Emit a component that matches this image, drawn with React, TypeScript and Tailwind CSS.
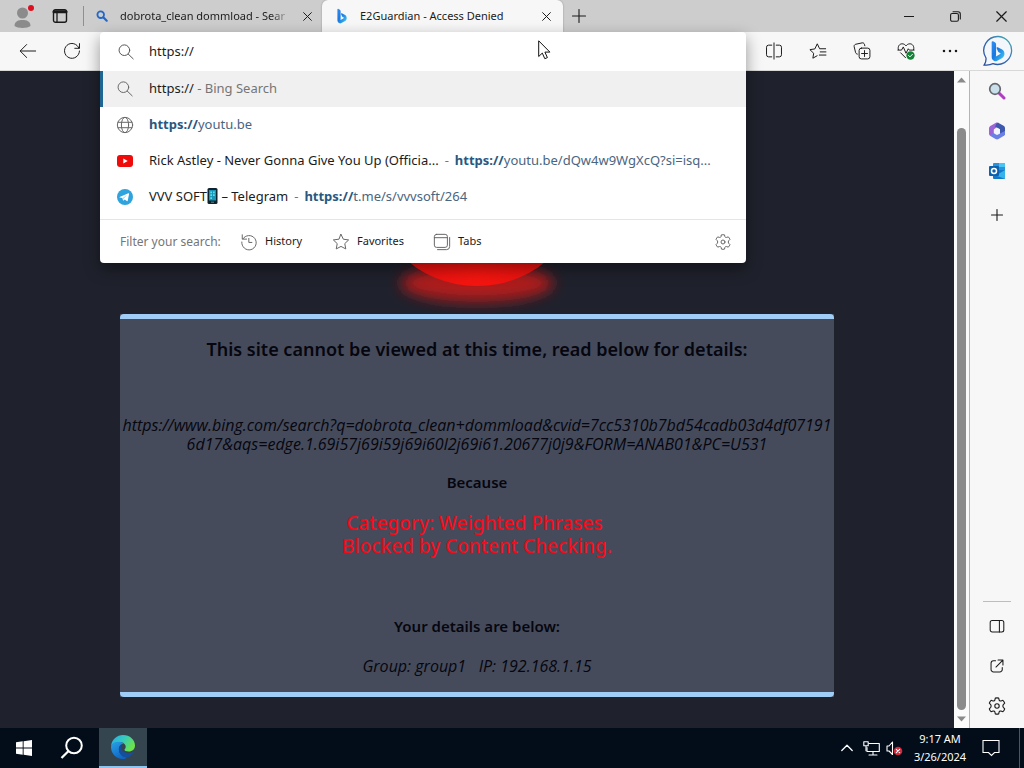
import React, { useState } from 'react';

type IconProps = { size?: number; className?: string; box?: string; children: React.ReactNode };

function Icon({ size = 20, className = '', box = '0 0 20 20', children }: IconProps) {
  return (
    <svg
      width={size}
      height={size}
      viewBox={box}
      fill="none"
      stroke="currentColor"
      strokeWidth="1.1"
      strokeLinecap="round"
      strokeLinejoin="round"
      aria-hidden="true"
      className={`shrink-0 ${className}`}
    >
      {children}
    </svg>
  );
}

const SearchIcon = ({ className = '' }: { className?: string }) => (
  <Icon size={18} className={className}>
    <circle cx="8.2" cy="8" r="5.9" />
    <path d="M12.5 12.300 18 17.6" />
  </Icon>
);

const GearIcon = ({ size = 18 }: { size?: number }) => (
  <Icon size={size}>
    <circle cx="10" cy="10" r="2.2" />
    <path d="M8.3 2.1 Q10 1.6 11.7 2.1 L12.1 4 Q12.5 5.3 14 4.9 L15.9 4.3 Q17.2 5.6 17.7 7.2 L16.3 8.6 Q15.3 10 16.3 11.4 L17.7 12.8 Q17.2 14.4 15.9 15.7 L14 15.1 Q12.5 14.7 12.1 16 L11.7 17.9 Q10 18.4 8.3 17.9 L7.9 16 Q7.5 14.7 6 15.1 L4.1 15.7 Q2.8 14.4 2.3 12.8 L3.7 11.4 Q4.7 10 3.7 8.6 L2.3 7.2 Q2.8 5.6 4.1 4.3 L6 4.9 Q7.5 5.3 7.9 4 Z" />
  </Icon>
);

const CloseIcon = ({ size = 10 }: { size?: number }) => (
  <Icon size={size} box="0 0 10 10">
    <path d="M.7.7 9.3 9.3M9.3.7.7 9.3" />
  </Icon>
);

const PlusIcon = () => (
  <Icon size={14} box="0 0 14 14">
    <path d="M7 .5v13M.5 7h13" />
  </Icon>
);

function BingMark({ size, id }: { size: number; id: string }) {
  return (
    <svg width={size} height={size} viewBox="0 0 16 16" aria-hidden="true" className="shrink-0">
      <defs>
        <linearGradient id={id} x1="0" y1="0" x2="1" y2="1">
          <stop offset="0" stopColor="#2f8df2" />
          <stop offset="0.45" stopColor="#1a78e0" />
          <stop offset="1" stopColor="#43d0f2" />
        </linearGradient>
      </defs>
      <path
        fill={`url(#${id})`}
        d="M3.4 1.5c0-.6.5-.8 1-.6l1.5.9c.5.4.7.8.7 1.4v7.6l-.1 1.2 2.8-1.6.7-.7-1.3-.7c-.5-.3-.7-.7-.9-1.2L7 6c-.2-.6.2-1 .8-.7l2.900 1.500c1.200.7 2 1.800 2 3.200 0 1.300-.5 2.300-1.600 3L7.500 15c-.9.500-1.700.500-2.500 0-1-.6-1.600-1.500-1.600-2.700Z"
      />
    </svg>
  );
}

const BingChat = () => (
  <span className="relative flex size-8 items-center justify-center">
    <svg width="32" height="32" viewBox="0 0 32 32" aria-hidden="true" className="absolute inset-0">
      <defs>
        <linearGradient id="bubble" x1="0" y1="1" x2="1" y2="0">
          <stop offset="0" stopColor="#234a9e" />
          <stop offset="0.6" stopColor="#3c74b4" />
          <stop offset="1" stopColor="#41b8b0" />
        </linearGradient>
      </defs>
      <path
        d="M16.500 1.500a14 14 0 1 1-5.500 27.200c-2.500 1.300-5.500 1.600-8.800 1.300 1.700-2.300 2-4.500 1.800-7A14 14 0 0 1 16.500 1.500Z"
        fill="#f3f7fc"
        stroke="url(#bubble)"
        strokeWidth="1.300"
      />
    </svg>
    <span className="relative">
      <BingMark size={22} id="bing-chat" />
    </span>
  </span>
);

const EdgeLogo = () => (
  <svg width="26" height="26" viewBox="0 0 26 26" aria-hidden="true">
    <defs>
      <linearGradient id="edge-top" x1="0" y1="0" x2="1" y2="0.5">
        <stop offset="0" stopColor="#27a9e8" />
        <stop offset="0.5" stopColor="#35c9c0" />
        <stop offset="1" stopColor="#6be24a" />
      </linearGradient>
      <linearGradient id="edge-body" x1="0" y1="0" x2="0.6" y2="1">
        <stop offset="0" stopColor="#2aa3e6" />
        <stop offset="1" stopColor="#0f63c4" />
      </linearGradient>
    </defs>
    <path d="M1 12C2 5 7 1 13 1c7 0 12 5 12 10.500 0 3.700-2.700 6-6.300 6-2.700 0-4.200-.8-4.200-1.700 0-.7 1.200-1.100 1.200-3 0-2.500-2.500-4.800-6-4.800C5.500 8 2 10 1 12Z" fill="url(#edge-top)" />
    <path d="M1 12c1-3 4.500-4.500 8.200-4.300 1.800.1 3.500.8 4.700 1.800-3.400.4-5 3-5 5.800 0 4.800 4 8.600 8.700 8.100-1.400.9-3 1.500-4.600 1.500C6 25 .6 19.500 1 12Z" fill="url(#edge-body)" />
    <path d="M11.500 10.600c-1.700 1-2.600 2.700-2.600 4.700 0 4.600 3.700 8.400 8.600 8.100 2.600-.9 4.800-2.700 6.100-5-.2-.5-.6-.4-1-.2-4.700 2.200-10.800.2-11.500-4.200-.2-1.300 0-2.500.4-3.400Z" fill="#134f9e" />
  </svg>
);

const YoutubeIcon = () => (
  <svg width="18" height="18" viewBox="0 0 18 18" aria-hidden="true" className="shrink-0">
    <rect x="1" y="3" width="16" height="12" rx="3" fill="#f00b0b" />
    <path d="M7.300 6.500v5L11.700 9Z" fill="#fff" />
  </svg>
);

const TelegramIcon = () => (
  <svg width="18" height="18" viewBox="0 0 18 18" aria-hidden="true" className="shrink-0">
    <circle cx="9" cy="9" r="8" fill="#2fa3dd" />
    <path d="m3.600 8.900 8.800-3.600c.5-.2.8.1.7.6l-1.400 6.800c-.1.5-.5.6-.9.3l-2.100-1.600-1.100 1c-.3.3-.5.1-.6-.2l-.7-2.300-2.600-.5c-.4-.1-.4-.3-.1-.5Z" fill="#fff" />
    <path d="m6.900 9.800 4.300-2.900-3.400 3.600-.3 1.500Z" fill="#a9d6ee" />
  </svg>
);

const GlobeIcon = () => (
  <Icon size={18} className="text-[#666]">
    <circle cx="10" cy="10" r="8.500" />
    <ellipse cx="10" cy="10" rx="4" ry="8.500" />
    <path d="M2.300 7h15.400M2.300 13h15.400" />
  </Icon>
);

const PhoneGlyph = () => (
  <svg width="11" height="16" viewBox="0 0 11 16" role="img" aria-label="phone" className="inline-block align-[-3px]">
    <rect x="0.500" y="0" width="10" height="16" rx="1.500" fill="#10222c" />
    <rect x="2" y="2" width="7" height="10.500" fill="#1797b8" />
    <path d="M3.300 3.500h1.700v1.700H3.300zM6 3.500h1.700v1.700H6zM3.300 6.300h1.700V8H3.300zM6 6.300h1.700V8H6zM3.300 9.200h1.700v1.700H3.300z" fill="#63dbe6" />
    <path d="M4 14.200h3" stroke="#6b8994" strokeWidth="1" />
  </svg>
);

function TitleBar() {
  return (
    <header className="flex h-8 items-stretch bg-[#cdcdcd] text-[11px] text-[#1b1b1b]">
      <button aria-label="Profile" className="flex w-11 items-center justify-center">
        <svg width="24" height="26" viewBox="0 0 24 26" aria-hidden="true">
          <circle cx="12.500" cy="10" r="5.500" fill="#8b8b8b" />
          <path d="M4.500 23c0-5 4-6 8-6s8 1 8 6c-3 2.500-13 2.500-16 0Z" fill="#8b8b8b" />
          <circle cx="21" cy="5" r="3" fill="#dc1020" />
        </svg>
      </button>
      <button aria-label="Tab actions" className="flex w-8 items-center justify-center">
        <Icon size={16} box="0 0 16 16">
          <rect x="1.500" y="1.800" width="13" height="12.500" rx="2" strokeWidth="1.400" />
          <path d="M2 3.800h12" strokeWidth="3" />
          <path d="M5 4v10" strokeWidth="1.300" />
        </Icon>
      </button>
      <span className="my-1.5 ml-[7px] w-px bg-[#8f8f8f]" />
      <div className="flex w-[238px] items-center pr-2.5 pl-3">
        <svg width="12" height="12" viewBox="0 0 12 12" fill="none" stroke="#2368c8" strokeLinecap="round" aria-hidden="true">
          <circle cx="4.700" cy="4.700" r="3.300" strokeWidth="1.800" />
          <path d="m7.500 7.500 3.200 3.200" strokeWidth="2.200" />
        </svg>
        <span className="ml-3 flex-1 overflow-hidden whitespace-nowrap [mask-image:linear-gradient(to_right,#000_88%,transparent)]">
          dobrota_clean dommload - Sear
        </span>
        <button aria-label="Close tab" className="ml-3">
          <CloseIcon size={9} />
        </button>
      </div>
      <div className="flex w-[241px] items-center rounded-t-md bg-[#f7f7f7] px-3 shadow-[0_0_2px_rgba(0,0,0,0.3)]">
        <BingMark size={16} id="bing-tab" />
        <span className="ml-2.5 flex-1 whitespace-nowrap">E2Guardian - Access Denied</span>
        <button aria-label="Close tab">
          <CloseIcon size={9} />
        </button>
      </div>
      <button aria-label="New tab" className="flex w-8 items-center justify-center">
        <PlusIcon />
      </button>
      <div className="ml-auto flex">
        <button aria-label="Minimize" className="flex w-[46px] items-center justify-center">
          <Icon size={10} box="0 0 10 10">
            <path d="M0 5.500h10" />
          </Icon>
        </button>
        <button aria-label="Restore" className="flex w-[46px] items-center justify-center">
          <Icon size={11} box="0 0 11 11">
            <rect x="0.600" y="2.500" width="7.800" height="7.800" rx="1.500" />
            <path d="M3 .7h5a2.300 2.300 0 0 1 2.300 2.300v5" />
          </Icon>
        </button>
        <button aria-label="Close" className="flex w-[46px] items-center justify-center">
          <CloseIcon size={11} />
        </button>
      </div>
    </header>
  );
}

type Suggestion = { icon: React.ReactNode; title?: React.ReactNode; rest: string };

const suggestions: Suggestion[] = [
  { icon: <GlobeIcon />, rest: 'youtu.be' },
  {
    icon: <YoutubeIcon />,
    title: 'Rick Astley - Never Gonna Give You Up (Officia...',
    rest: 'youtu.be/dQw4w9WgXcQ?si=isq...',
  },
  {
    icon: <TelegramIcon />,
    title: (
      <>
        VVV SOFT
        <PhoneGlyph /> – Telegram
      </>
    ),
    rest: 't.me/s/vvvsoft/264',
  },
];

function AddressBar() {
  const [query, setQuery] = useState('https://');
  return (
    <div className="relative flex-1">
      <div className="absolute inset-x-0 top-0 z-20 rounded bg-white text-[13px] text-[#1b1b1b] shadow-[0_6px_16px_rgba(0,0,0,0.4)]">
        <label className="flex h-[39px] items-center pl-[17px]">
          <SearchIcon className="text-[#555]" />
          <input
            aria-label="Address and search bar"
            value={query}
            onChange={(e) => setQuery(e.target.value)}
            className="ml-3.5 flex-1 bg-transparent outline-none"
          />
        </label>
        <ul>
          <li className="flex h-9 items-center border-l-[3px] border-[#1f6792] bg-[#f0f0f0] pl-[13px]">
            <SearchIcon className="text-[#666]" />
            <span className="ml-[15px]">
              https:// <span className="text-[#757575]">- Bing Search</span>
            </span>
          </li>
          {suggestions.map((s) => (
            <li key={s.rest} className="flex h-9 items-center pl-4 whitespace-nowrap">
              {s.icon}
              <span className="ml-[15px] flex items-center">
                {s.title && (
                  <>
                    <span>{s.title}</span>
                    <span className="mx-1.5 text-[#757575]">-</span>
                  </>
                )}
                <a href="#suggestion" className="text-[#4a6580]">
                  <b className="font-bold text-[#28587f]">https://</b>
                  {s.rest}
                </a>
              </span>
            </li>
          ))}
        </ul>
        <div className="mt-1 flex h-11 items-center border-t border-[#e5e5e5] pr-3.5 pl-5 text-[11px]">
          <span className="w-[120px] text-[12px] text-[#757575]">Filter your search:</span>
          <button className="flex w-[92px] items-center gap-[7px]">
            <Icon size={18} className="text-[#666]">
              <path d="M3.200 6.500A8 8 0 1 1 2 10M2.500 2v4.800h4.800M9.800 6v4.500h3.400" />
            </Icon>
            History
          </button>
          <button className="flex w-[101px] items-center gap-[7px]">
            <Icon size={18} className="text-[#666]">
              <path d="m10 1.500 2.600 5.400 5.900.8-4.300 4.100 1.100 5.900L10 14.900l-5.300 2.800 1.100-5.900L1.500 7.700l5.900-.8Z" />
            </Icon>
            Favorites
          </button>
          <button className="flex items-center gap-[7px]">
            <Icon size={18} className="text-[#666]">
              <rect x="1.500" y="1.500" width="14.500" height="14.500" rx="2.500" />
              <path d="M1.500 5.200H16M18.500 5v10a3.500 3.500 0 0 1-3.500 3.500H5" />
            </Icon>
            Tabs
          </button>
          <button aria-label="Search settings" className="ml-auto text-[#666]">
            <GearIcon />
          </button>
        </div>
      </div>
    </div>
  );
}

function Toolbar() {
  const tool = 'flex w-11 items-center justify-center';
  return (
    <nav className="flex h-[39px] items-stretch border-b border-[#d8d8d8] bg-[#f7f7f7] text-[#1b1b1b]">
      <button aria-label="Back" className="flex w-14 items-center justify-center">
        <Icon size={18}>
          <path d="M18.500 10h-17M8.500 2.800 1.300 10l7.200 7.200" />
        </Icon>
      </button>
      <button aria-label="Refresh" className="mr-3 flex w-8 items-center justify-center">
        <Icon size={18}>
          <path d="M17.800 7A8.300 8.300 0 1 0 18.300 10M18.300 1.800V7h-5.200" />
        </Icon>
      </button>
      <AddressBar />
      <div className="flex pl-1.5">
        <button aria-label="Split screen" className={tool}>
          <Icon size={18}>
            <path d="M7.500 3.500H4A2.300 2.300 0 0 0 1.700 5.800v8.400A2.300 2.300 0 0 0 4 16.500h3.500M12.500 3.500H16a2.300 2.300 0 0 1 2.300 2.300v8.400a2.300 2.300 0 0 1-2.300 2.300h-3.500M10 1v18" />
          </Icon>
        </button>
        <button aria-label="Favorites" className={tool}>
          <Icon size={18}>
            <path d="M9 15.300 4.300 18l.9-5.500L1 8.500l5.500-.8L9.200 2l2.600 5.500H18.500M12.500 11h6.300M11.500 14.500h7.300" />
          </Icon>
        </button>
        <button aria-label="Collections" className={tool}>
          <Icon size={18}>
            <rect x="6.800" y="6.800" width="12" height="12" rx="2.500" />
            <path d="M12.800 9.500v6.600M9.500 12.800h6.600M4.800 13.500c-1.200-.2-1.700-1-2-2L1.300 5.200c-.3-1.300.4-2.300 1.700-2.700l7-1.500c1.300-.3 2.200.3 2.700 1.500l.4 1.700" />
          </Icon>
        </button>
        <button aria-label="Browser essentials" className={tool}>
          <Icon size={18}>
            <path d="M1.500 8.500C.5 4.500 3 2 5.700 2c2 0 3.300 1 4.300 2.300C11 3 12.300 2 14.300 2 17 2 19.500 4.500 18.500 8.500M1 9h4l2-3.500 3 7 2.500-5 1.200 1.500H19M4 12l5.500 5.500" />
            <circle cx="15" cy="15" r="4.600" fill="#128236" stroke="none" />
            <path d="m12.900 15 1.500 1.500 2.700-2.800" stroke="#fff" />
          </Icon>
        </button>
        <button aria-label="Settings and more" className={tool}>
          <Icon size={16}>
            <g fill="currentColor" stroke="none">
              <circle cx="2.500" cy="10" r="1.600" />
              <circle cx="10" cy="10" r="1.600" />
              <circle cx="17.500" cy="10" r="1.600" />
            </g>
          </Icon>
        </button>
        <button aria-label="Bing chat" className="flex w-[52px] items-center justify-center">
          <BingChat />
        </button>
      </div>
    </nav>
  );
}

function BlockedPage() {
  return (
    <main className="flex-1 bg-[#1f212c] px-[120px] text-center text-[#05060f]">
      <svg width="260" height="243" viewBox="0 0 260 243" aria-hidden="true" className="mx-auto block">
        <defs>
          <filter id="glow" x="-30%" y="-60%" width="160%" height="220%">
            <feGaussianBlur stdDeviation="7" />
          </filter>
          <radialGradient id="disc" cx="0.500" cy="0.950" r="0.550">
            <stop offset="0" stopColor="#f7150f" />
            <stop offset="0.500" stopColor="#ea1210" />
            <stop offset="1" stopColor="#b80c10" />
          </radialGradient>
        </defs>
        <ellipse cx="130" cy="212" rx="76" ry="19" fill="#ad1a1f" filter="url(#glow)" />
        <circle cx="130" cy="106" r="109" fill="url(#disc)" />
      </svg>
      <section className="bg-[#464b5b]">
        <div className="h-[5px] rounded-t bg-[#9fcdf5]" />
        <h1 className="pt-4 text-[18px] leading-7 font-semibold">
          This site cannot be viewed at this time, read below for details:
        </h1>
        <p className="pt-[53px] font-['Open_Sans','Noto_Sans',sans-serif] text-[16px] leading-[19px] whitespace-nowrap italic">
          https://www.bing.com/search?q=dobrota_clean+dommload&amp;cvid=7cc5310b7bd54cadb03d4df07191
          <br />
          6d17&amp;aqs=edge.1.69i57j69i59j69i60l2j69i61.20677j0j9&amp;FORM=ANAB01&amp;PC=U531
        </p>
        <p className="pt-[18px] text-[15px] leading-5 font-semibold">Because</p>
        <p className="pt-5 text-[19px] leading-[23px] font-medium text-[#f20d1c]">
          Category: Weighted Phrases&nbsp;
          <br />
          Blocked by Content Checking.
        </p>
        <h2 className="pt-[58px] text-[15px] leading-5 font-semibold">Your details are below:</h2>
        <p className="pt-5 pb-4 font-['Open_Sans','Noto_Sans',sans-serif] text-[16px] leading-5 italic">
          Group: group1&nbsp;&nbsp; IP: 192.168.1.15
        </p>
        <div className="h-[5px] rounded-b bg-[#9fcdf5]" />
      </section>
    </main>
  );
}

function ScrollBar() {
  return (
    <div className="flex w-4 flex-col items-center justify-between border-r border-[#b5b5b5] bg-[#fbfbfb] py-1.5" aria-hidden="true">
      <svg width="9" height="6" viewBox="0 0 9 6">
        <path d="M0 5.500 4.500.5 9 5.500Z" fill="#8a8a8a" />
      </svg>
      <div className="mt-[45px] mb-1.5 w-[9px] flex-1 rounded-full bg-[#8b8b8b]" />
      <svg width="9" height="6" viewBox="0 0 9 6">
        <path d="M0 .5 4.500 5.500 9 .5Z" fill="#8a8a8a" />
      </svg>
    </div>
  );
}

function SideBar() {
  const item = 'flex h-10 w-10 items-center justify-center';
  return (
    <aside className="flex w-[54px] flex-col items-center bg-[#f7f7f7] text-[#1b1b1b]">
      <button aria-label="Search" className={item}>
        <svg width="18" height="18" viewBox="0 0 18 18" aria-hidden="true">
          <path d="m11 11 5 5" stroke="#b13bc4" strokeWidth="3" strokeLinecap="round" />
          <circle cx="7" cy="7" r="5.300" fill="#c9e0ea" stroke="#65666e" strokeWidth="1.700" />
        </svg>
      </button>
      <button aria-label="Microsoft 365" className={item}>
        <svg width="18" height="18" viewBox="0 0 18 18" aria-hidden="true">
          <path d="M8 .8 2.700 3.800C1.600 4.400 1 5.400 1 6.600v4.900c0 1 .6 2 1.500 2.500L5.800 12V7.500L11 3.500C10.500 1 9.200.2 8 .8Z" fill="#9b65d8" />
          <path d="M11 1.200 15.600 3.800C16.500 4.300 17 5.300 17 6.300v5c0 1.100-.5 2-1.500 2.500L12 12V7.300L7 4.500 9 1C9.600.7 10.400.8 11 1.200Z" fill="#3e58ae" />
          <path d="M2 13.800 7.500 17c1 .6 2 .6 3 0l5-3c1-.6 1.500-1.500 1.500-2.500V9l-7 3.600c-.7.4-1.300.4-2 0L5.500 11 2 13.800Z" fill="#6a82e6" />
          <path d="m9 6 2.700 1.500v3L9 12l-2.700-1.500v-3Z" fill="#f3f6ff" />
        </svg>
      </button>
      <button aria-label="Outlook" className={item}>
        <svg width="18" height="18" viewBox="0 0 18 18" aria-hidden="true">
          <rect x="5" y="1" width="12" height="8" rx="1" fill="#2793dc" />
          <path d="M11 1h6v4h-6z" fill="#4ac4f2" />
          <path d="M5 8h12v8a1 1 0 0 1-1 1H6a1 1 0 0 1-1-1Z" fill="#1477c8" />
          <path d="m17 8-9 5.500 8.500 3.200.5-.7Z" fill="#35b4ec" />
          <rect x="1" y="4" width="10" height="10" rx="1" fill="#0c62ae" />
          <circle cx="6" cy="9" r="2.500" fill="none" stroke="#fff" strokeWidth="1.500" />
        </svg>
      </button>
      <button aria-label="Customize" className="mt-1 flex h-10 w-10 items-center justify-center">
        <Icon size={12} box="0 0 12 12">
          <path d="M6 .5v11M.5 6h11" />
        </Icon>
      </button>
      <div className="mt-auto w-7 border-t border-[#bdbdbd]" />
      <button aria-label="Toggle sidebar" className="mt-1 flex h-10 w-10 items-center justify-center">
        <Icon size={16}>
          <rect x="1.500" y="3" width="17" height="14.500" rx="2.500" strokeWidth="1.300" />
          <path d="M13 3v14.500" strokeWidth="1.300" />
        </Icon>
      </button>
      <button aria-label="Open link" className={item}>
        <Icon size={14}>
          <path d="M8 2.500H5A3.500 3.500 0 0 0 1.500 6v9A3.500 3.500 0 0 0 5 18.500h9a3.500 3.500 0 0 0 3.500-3.500v-3M11.500 1.500h7v7M18 2l-9.500 9.500" strokeWidth="1.500" />
        </Icon>
      </button>
      <button aria-label="Settings" className="mb-0.5 flex h-10 w-10 items-center justify-center">
        <GearIcon size={20} />
      </button>
    </aside>
  );
}

function TaskBar() {
  return (
    <footer className="flex h-10 items-stretch bg-[#020d19] text-[11px] text-white">
      <button aria-label="Start" className="flex w-12 items-center justify-center">
        <svg width="16" height="16" viewBox="0 0 16 16" fill="#fff" aria-hidden="true">
          <path d="M0 2.300 6.700 1.300v6.200H0zM7.600 1.200 16 0v7.500H7.600zM0 8.400h6.700v6.300L0 13.700zM7.600 8.400H16V16l-8.400-1.200z" />
        </svg>
      </button>
      <button aria-label="Search" className="mr-[3px] flex w-12 items-center justify-center">
        <svg width="24" height="24" viewBox="0 0 24 24" fill="none" stroke="#fff" aria-hidden="true">
          <circle cx="14" cy="9.500" r="7.800" strokeWidth="2" />
          <path d="M8.300 15.300 1.500 22" strokeWidth="2.300" />
        </svg>
      </button>
      <button aria-label="Microsoft Edge" className="flex w-12 items-center justify-center border-b-2 border-[#8fc4ee] bg-[#34454f]">
        <EdgeLogo />
      </button>
      <div className="ml-auto flex items-center">
        <button aria-label="Show hidden icons">
          <Icon size={12} box="0 0 12 12">
            <path d="M.8 8.500 6 3.300l5.200 5.200" strokeWidth="1.300" />
          </Icon>
        </button>
        <button aria-label="Network" className="ml-2.5">
          <Icon size={17} box="0 0 17 17">
            <path d="M6 3.500h10.300v8H4v-4M10 11.500v3.500M6 15h8" />
            <path d="M.8 1.800h4.400v4H.8zM3 5.800v5" />
          </Icon>
        </button>
        <button aria-label="Volume muted" className="ml-1.5">
          <Icon size={17} box="0 0 17 17">
            <path d="M1 6h2l3.500-4v12.500L3 11H1Z" />
            <circle cx="12" cy="11" r="4.300" fill="#d02a3c" stroke="none" />
            <path d="m10.300 9.300 3.400 3.400m0-3.400-3.400 3.400" stroke="#fff" />
          </Icon>
        </button>
        <div className="ml-[7px] w-[60px] text-center leading-[18px] whitespace-nowrap">
          9:17 AM
          <br />
          3/26/2024
        </div>
        <button aria-label="Notifications" className="mr-[19px] ml-3">
          <Icon size={18} box="0 0 18 18">
            <path d="M1 1.500h16v12h-4.500l-3 3-3-3H1Z" strokeLinejoin="miter" />
          </Icon>
        </button>
        <span className="mr-1 h-10 w-px bg-[#4b5662]" />
      </div>
    </footer>
  );
}

export default function App() {
  return (
    <div className="relative flex min-h-screen flex-col font-['Noto_Sans','Open_Sans',sans-serif]">
      <TitleBar />
      <Toolbar />
      <div className="flex flex-1 items-stretch">
        <BlockedPage />
        <ScrollBar />
        <SideBar />
      </div>
      <TaskBar />
      <svg width="13" height="20" viewBox="0 0 13 20" aria-hidden="true" className="pointer-events-none absolute top-10 left-[538px] z-30">
        <path d="M.7.8v15.700l3.600-3.400 2.500 5.600 2.600-1.100-2.500-5.500h5Z" fill="#fff" stroke="#111" strokeWidth="1" />
      </svg>
    </div>
  );
}
